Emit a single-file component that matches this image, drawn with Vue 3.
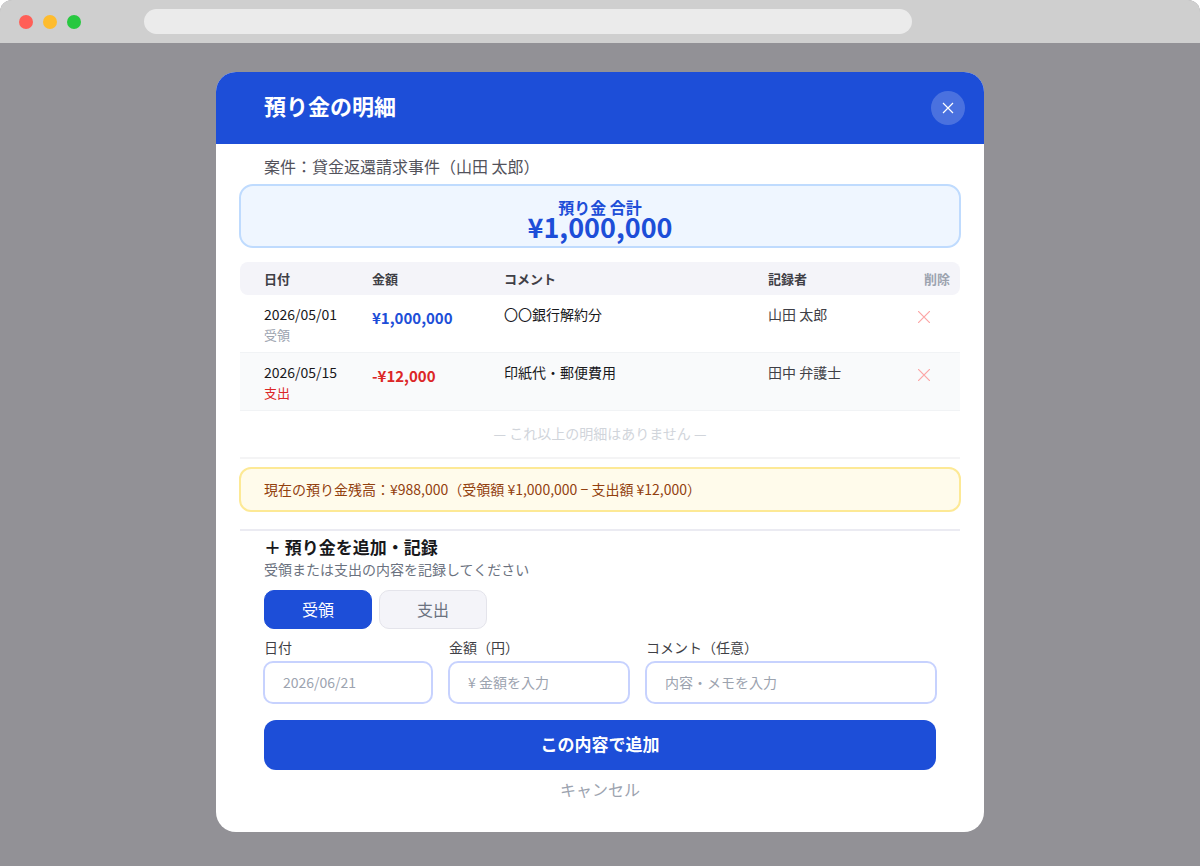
<script setup>
import { ref } from 'vue'

const entries = [
  { date: '2026/05/01', kind: '受領', amount: '¥1,000,000', comment: '〇〇銀行解約分', author: '山田 太郎', out: false },
  { date: '2026/05/15', kind: '支出', amount: '-¥12,000', comment: '印紙代・郵便費用', author: '田中 弁護士', out: true },
]
const kinds = ['受領', '支出']
const kind = ref('受領')
const date = ref('')
const amount = ref('')
const memo = ref('')
</script>

<template>
  <div class="window">
    <header class="toolbar">
      <div class="lights">
        <span class="light red"></span>
        <span class="light yellow"></span>
        <span class="light green"></span>
      </div>
      <div class="address"></div>
    </header>

    <main class="backdrop">
      <section class="modal" role="dialog" aria-labelledby="modal-title">
        <div class="modal-head">
          <h1 id="modal-title">預り金の明細</h1>
          <button class="close" type="button" aria-label="閉じる">
            <svg width="12" height="12" viewBox="0 0 12 12" fill="none" stroke="currentColor" stroke-width="1.2">
              <path d="M1 1l10 10M11 1L1 11" />
            </svg>
          </button>
        </div>

        <p class="case">案件：貸金返還請求事件（山田 太郎）</p>

        <div class="total">
          <span class="total-label">預り金 合計</span>
          <strong class="total-value">¥1,000,000</strong>
        </div>

        <div class="ledger">
          <table>
            <colgroup>
              <col class="col-date" />
              <col class="col-amount" />
              <col />
              <col class="col-author" />
              <col class="col-delete" />
            </colgroup>
            <thead>
              <tr>
                <th scope="col">日付</th>
                <th scope="col">金額</th>
                <th scope="col">コメント</th>
                <th scope="col">記録者</th>
                <th scope="col" class="th-delete">削除</th>
              </tr>
            </thead>
            <tbody>
              <tr v-for="e in entries" :key="e.date" :class="{ out: e.out }">
                <td>
                  <span class="date">{{ e.date }}</span>
                  <span class="kind">{{ e.kind }}</span>
                </td>
                <td class="amount">{{ e.amount }}</td>
                <td class="comment">{{ e.comment }}</td>
                <td class="author">{{ e.author }}</td>
                <td>
                  <button class="remove" type="button" aria-label="削除">
                    <svg width="12" height="12" viewBox="0 0 12 12" fill="none" stroke="currentColor" stroke-width="1.2">
                      <path d="M0 0l12 12M12 0L0 12" />
                    </svg>
                  </button>
                </td>
              </tr>
            </tbody>
          </table>
          <p class="end">— これ以上の明細はありません —</p>
        </div>

        <p class="balance">現在の預り金残高：¥988,000（受領額 ¥1,000,000 − 支出額 ¥12,000）</p>

        <form class="entry" @submit.prevent>
          <h2>＋ 預り金を追加・記録</h2>
          <p class="hint">受領または支出の内容を記録してください</p>

          <div class="kinds">
            <button
              v-for="k in kinds"
              :key="k"
              type="button"
              class="kind-button"
              :class="{ active: k === kind }"
              :aria-pressed="k === kind"
              @click="kind = k"
            >{{ k }}</button>
          </div>

          <div class="fields">
            <div class="field">
              <label for="f-date">日付</label>
              <input id="f-date" v-model="date" type="text" placeholder="2026/06/21" />
            </div>
            <div class="field">
              <label for="f-amount">金額（円）</label>
              <input id="f-amount" v-model="amount" type="text" placeholder="¥ 金額を入力" />
            </div>
            <div class="field">
              <label for="f-memo">コメント（任意）</label>
              <input id="f-memo" v-model="memo" type="text" placeholder="内容・メモを入力" />
            </div>
          </div>

          <button class="submit" type="submit">この内容で追加</button>
          <button class="cancel" type="button">キャンセル</button>
        </form>
      </section>
    </main>
  </div>
</template>

<style>
body {
  background: #fff;
}
</style>

<style scoped>
.window,
.window * {
  box-sizing: border-box;
}
.window {
  display: flex;
  flex-direction: column;
  min-height: 100vh;
  border-radius: 12px 12px 0 0;
  overflow: hidden;
  background: #929196;
  font-family: "Noto Sans CJK JP", "Noto Sans", sans-serif;
  color: #18181b;
}
button,
input {
  font-family: inherit;
  margin: 0;
}
button {
  border: 0;
  padding: 0;
  background: none;
  cursor: pointer;
}
h1,
h2,
p {
  margin: 0;
}
svg {
  display: block;
}

.toolbar {
  display: flex;
  align-items: center;
  height: 43px;
  background: #cfcfcf;
}
.lights {
  display: flex;
  gap: 10px;
  width: 12%;
  padding-left: 19px;
}
.light {
  width: 14px;
  height: 14px;
  border-radius: 50%;
}
.red { background: #ff5f57; }
.yellow { background: #febc2e; }
.green { background: #28c840; }
.address {
  width: 64%;
  height: 25px;
  border-radius: 13px;
  background: #ebebeb;
}

.backdrop {
  flex: 1;
  padding: 29px 24px 34px;
}
.modal {
  max-width: 768px;
  margin: 0 auto;
  padding-bottom: 31px;
  border-radius: 20px;
  overflow: hidden;
  background: #fff;
}
.modal-head {
  display: flex;
  align-items: center;
  justify-content: space-between;
  height: 72px;
  padding: 0 19px 0 48px;
  background: #1d4ed8;
  color: #fff;
}
h1 {
  padding-bottom: 6px;
  font-size: 22px;
  line-height: 32px;
  font-weight: 700;
}
.close {
  display: flex;
  align-items: center;
  justify-content: center;
  width: 34px;
  height: 34px;
  border-radius: 50%;
  background: rgba(255, 255, 255, 0.2);
  color: #fff;
}
.case {
  padding: 10px 48px 6px;
  font-size: 16px;
  line-height: 24px;
  color: #52525b;
}
.total {
  display: flex;
  flex-direction: column;
  align-items: center;
  height: 64px;
  margin: 0 23px 14px;
  padding-top: 11px;
  border: 2px solid #bfdbfe;
  border-radius: 14px;
  background: #eff6ff;
  color: #1d4ed8;
}
.total-label {
  font-size: 16px;
  line-height: 20px;
  font-weight: 700;
}
.total-value {
  font-size: 27px;
  line-height: 20px;
  font-weight: 700;
}

.ledger {
  margin: 0 24px 8px;
  border-bottom: 2px solid #f4f4f5;
}
table {
  width: 100%;
  table-layout: fixed;
  border-collapse: separate;
  border-spacing: 0;
}
.col-date,
.col-amount {
  width: 132px;
}
.col-author {
  width: 150px;
}
.col-delete {
  width: 42px;
}
th {
  height: 33px;
  padding: 0;
  background: #f4f4f9;
  font-size: 13px;
  line-height: 20px;
  font-weight: 700;
  text-align: left;
  color: #3f3f46;
}
th:first-child {
  border-radius: 8px 0 0 8px;
}
th:last-child {
  border-radius: 0 8px 8px 0;
}
th:first-child,
td:first-child {
  padding-left: 24px;
}
th.th-delete {
  padding-left: 6px;
  color: #9ca3af;
}
td {
  height: 58px;
  padding: 9px 0 0;
  border-bottom: 1px solid #f1f3f5;
  vertical-align: top;
  font-size: 14px;
  line-height: 20px;
}
.date,
.kind {
  display: block;
}
.kind {
  font-size: 13px;
  line-height: 22px;
  color: #9ca3af;
}
.out td {
  background: #f9fafb;
}
.out .kind {
  color: #dc2626;
}
td.amount {
  font-size: 15px;
  line-height: 28px;
  font-weight: 700;
  color: #1d4ed8;
}
.out td.amount {
  color: #dc2626;
}
.author {
  color: #3f3f46;
}
.remove {
  display: block;
  padding: 7px 0;
  color: #fca5a5;
}
.end {
  padding: 11px 0 13px;
  font-size: 14px;
  line-height: 22px;
  text-align: center;
  color: #d1d5db;
}
.balance {
  margin: 0 23px 17px;
  padding: 9px 23px 10px;
  border: 2px solid #fde995;
  border-radius: 12px;
  background: #fffbeb;
  font-size: 14px;
  line-height: 22px;
  color: #92400e;
}

.entry {
  margin: 0 24px;
  padding: 4px 23px 0;
  border-top: 2px solid #ebebf2;
}
h2 {
  padding-left: 1px;
  font-size: 17px;
  line-height: 23px;
  font-weight: 700;
}
.hint {
  padding-left: 1px;
  font-size: 14px;
  line-height: 22px;
  color: #6b7280;
}
.kinds {
  display: flex;
  gap: 7px;
  margin-top: 10px;
  padding-left: 1px;
}
.kind-button {
  width: 108px;
  height: 39px;
  padding-bottom: 2px;
  border: 1px solid #e4e4eb;
  border-radius: 10px;
  background: #f4f4f9;
  font-size: 16px;
  color: #6b7280;
}
.kind-button.active {
  border-color: #1d4ed8;
  background: #1d4ed8;
  color: #fff;
}
.fields {
  display: grid;
  grid-template-columns: 170fr 182fr 292fr;
  gap: 15px;
  margin-top: 7px;
}
.field {
  min-width: 0;
}
label {
  display: block;
  padding-left: 1px;
  font-size: 14px;
  line-height: 22px;
  color: #3f3f46;
}
input {
  display: block;
  width: 100%;
  height: 43px;
  margin-top: 3px;
  padding: 0 18px 2px;
  border: 2px solid #c7d2fe;
  border-radius: 10px;
  background: #fff;
  font-size: 14px;
  color: #18181b;
}
input::placeholder {
  color: #9ca3af;
  opacity: 1;
}
.submit {
  display: block;
  width: calc(100% - 2px);
  height: 50px;
  margin: 16px 1px 0;
  padding-bottom: 3px;
  border-radius: 12px;
  background: #1d4ed8;
  font-size: 17px;
  font-weight: 700;
  color: #fff;
}
.cancel {
  display: block;
  margin: 7px auto 0;
  font-size: 16px;
  line-height: 24px;
  color: #9ca3af;
}
</style>
